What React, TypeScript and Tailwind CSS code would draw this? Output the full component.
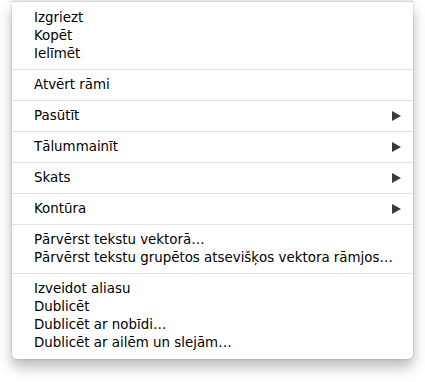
const groups: { label: string; sub?: boolean }[][] = [
  [{ label: 'Izgriezt' }, { label: 'Kopēt' }, { label: 'Ielīmēt' }],
  [{ label: 'Atvērt rāmi' }],
  [{ label: 'Pasūtīt', sub: true }],
  [{ label: 'Tālummainīt', sub: true }],
  [{ label: 'Skats', sub: true }],
  [{ label: 'Kontūra', sub: true }],
  [
    { label: 'Pārvērst tekstu vektorā…' },
    { label: 'Pārvērst tekstu grupētos atsevišķos vektora rāmjos…' },
  ],
  [
    { label: 'Izveidot aliasu' },
    { label: 'Dublicēt' },
    { label: 'Dublicēt ar nobīdi…' },
    { label: 'Dublicēt ar ailēm un slejām…' },
  ],
];

function Arrow() {
  return (
    <svg width="9" height="10" viewBox="0 0 9 10" className="shrink-0">
      <path d="M0 0 L9 5 L0 10 Z" fill="#3a3a3a" />
    </svg>
  );
}

export default function App() {
  return (
    <div className="w-[425px] h-[382px] bg-white pl-[12px] pt-[1px]" style={{ fontFamily: '"DejaVu Sans", "Liberation Sans", sans-serif' }}>
      <div className="w-[401px] bg-white border-t border-[#d6d6d6] rounded-b-[5px] shadow-[0_8px_14px_rgba(0,0,0,0.28),0_0_2px_rgba(0,0,0,0.25)] pt-[7px] pb-[7px] text-[13.4px] leading-[18px] text-black">
        {groups.map((g, gi) => (
          <div key={gi}>
            {gi > 0 && <div className="h-px bg-[#e3e3e3] my-[6px]" />}
            {g.map((item) => (
              <div key={item.label} className="flex items-center justify-between pl-[22px] pr-[12px] whitespace-nowrap">
                <span>{item.label}</span>
                {item.sub && <Arrow />}
              </div>
            ))}
          </div>
        ))}
      </div>
    </div>
  );
}
